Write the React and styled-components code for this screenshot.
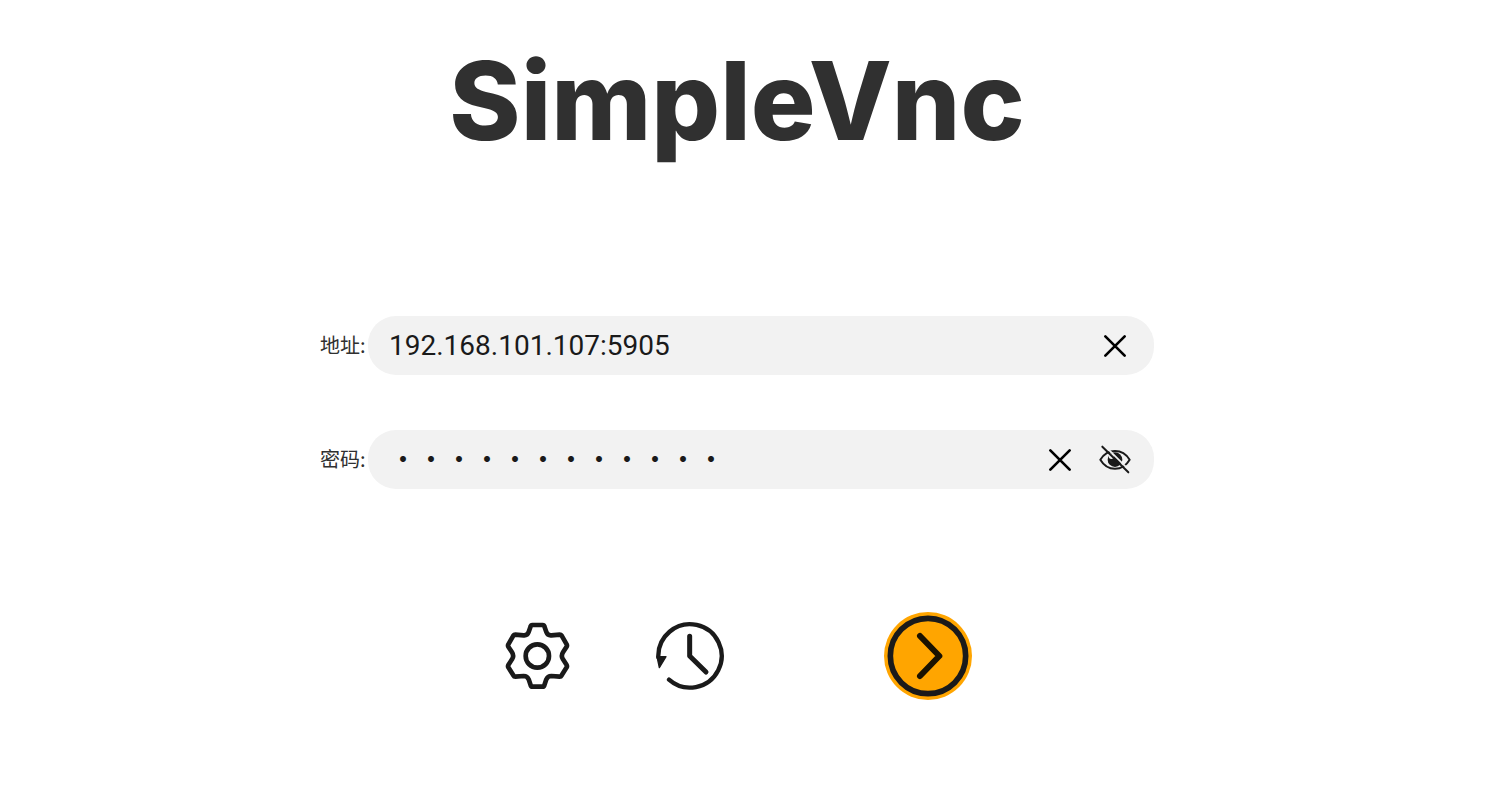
import React, { useState } from "react";
import styled, { createGlobalStyle } from "styled-components";

const GlobalStyle = createGlobalStyle`
  *, *::before, *::after { box-sizing: border-box; }
  body {
    margin: 0;
    background: #fff;
    color: #1a1a1a;
    font-family: "Noto Sans CJK SC", sans-serif;
  }
  button { font: inherit; color: inherit; }
`;

const Page = styled.main`
  display: flex;
  flex-direction: column;
  align-items: center;
  padding: 35px 28px 92px 0;
`;

const Title = styled.h1`
  margin: 0 0 149px;
  font-family: Inter, sans-serif;
  font-size: 108px;
  font-weight: 800;
  line-height: 132px;
  color: #303030;
`;

const Form = styled.form`
  display: flex;
  flex-direction: column;
  align-items: center;
  width: 100%;
`;

const Fields = styled.div`
  display: flex;
  flex-direction: column;
  gap: 55px;
  width: 100%;
  max-width: 834px;
`;

const Row = styled.div`
  display: flex;
  align-items: center;
`;

const Label = styled.label`
  flex: 0 0 48px;
  padding-bottom: 2px;
  font-size: 20px;
  line-height: 28px;
  white-space: nowrap;
  color: #303030;
`;

const Field = styled.div`
  flex: 1;
  min-width: 0;
  display: flex;
  align-items: center;
  gap: 23px;
  height: 59px;
  padding: 0 23px 0 21px;
  border-radius: 28px;
  background: #f2f2f2;
`;

const Input = styled.input`
  flex: 1;
  min-width: 0;
  padding: 0 0 ${(p) => (p.type === "password" ? 4 : 0)}px;
  border: 0;
  outline: 0;
  background: transparent;
  color: #1a1a1a;
  font-family: ${(p) => (p.type === "password" ? "" : "Roboto,")} "Noto Sans CJK SC", sans-serif;
  font-size: 28px;
  line-height: 40px;
`;

const PlainButton = styled.button`
  display: block;
  flex: none;
  width: ${(p) => p.$size}px;
  height: ${(p) => p.$size}px;
  padding: 0;
  border: 0;
  border-radius: 50%;
  background: ${(p) => p.$fill || "transparent"};
  cursor: pointer;

  svg {
    display: block;
    width: 100%;
    height: 100%;
    fill: none;
    stroke: currentColor;
    stroke-linecap: round;
    stroke-linejoin: round;
  }
`;

const Actions = styled.div`
  display: flex;
  align-items: center;
  gap: 158px;
  margin-top: 123px;
`;

const Tools = styled.div`
  display: flex;
  gap: 80px;
`;

const ClearIcon = () => (
  <svg viewBox="0 0 96 96">
    <path d="M19 19 77 77M77 19 19 77" stroke="#000" strokeWidth="8" />
  </svg>
);

const EyeOffIcon = () => (
  <svg viewBox="0 0 96 96" strokeWidth="6">
    <path d="M4 47C14 31 30 21 48 21s34 10 44 26C82 64 66 74 48 74S14 64 4 47Z" />
    <circle cx="48" cy="47" r="22" fill="currentColor" stroke="none" />
    <circle cx="37" cy="37" r="8" fill="#f2f2f2" stroke="none" />
    <path d="M16 4 92 80" stroke="#f2f2f2" strokeWidth="5" />
    <path d="M10 8 88 85" strokeWidth="6" />
  </svg>
);

const GearIcon = () => (
  <svg viewBox="36 30 216 216" strokeWidth="14">
    <path d="M127 45H158Q162 45 163 49L169 66Q173 77 184 76L209 74Q213 74 215 77L230 103Q232 107 230 110L219 127Q212 138 219 148L230 165Q232 169 230 172L215 196Q213 200 209 200L184 198Q173 198 169 208L163 226Q162 230 158 230H127Q123 230 122 226L116 208Q112 198 101 198L76 200Q72 200 70 196L55 172Q53 169 55 165L66 148Q73 138 66 127L55 110Q53 107 55 103L70 77Q72 74 76 74L101 76Q112 77 116 66L122 49Q123 45 127 45Z" />
    <circle cx="142" cy="138" r="35" />
  </svg>
);

const HistoryIcon = () => (
  <svg viewBox="42 30 216 216" strokeWidth="13">
    <path d="M55 142A95 95 0 1 1 87 209" />
    <path d="M149 79V138L198 186" strokeWidth="15" />
    <path d="M51 140H78L58 173Z" fill="currentColor" strokeWidth="4" />
  </svg>
);

const ConnectIcon = () => (
  <svg viewBox="18 17 264 264">
    <circle cx="150" cy="149" r="113" strokeWidth="17" />
    <path d="M126 89 184 149 126 209" stroke="#1a1200" strokeWidth="18" />
  </svg>
);

export default function App() {
  const [address, setAddress] = useState("192.168.101.107:5905");
  const [password, setPassword] = useState("abcdefghijkl");
  const [visible, setVisible] = useState(false);

  return (
    <>
      <GlobalStyle />
      <Page>
        <Title>SimpleVnc</Title>
        <Form onSubmit={(e) => e.preventDefault()}>
          <Fields>
            <Row>
              <Label htmlFor="address">地址:</Label>
              <Field>
                <Input
                  id="address"
                  type="text"
                  value={address}
                  onChange={(e) => setAddress(e.target.value)}
                />
                <PlainButton type="button" $size={32} aria-label="清除地址" onClick={() => setAddress("")}>
                  <ClearIcon />
                </PlainButton>
              </Field>
            </Row>
            <Row>
              <Label htmlFor="password">密码:</Label>
              <Field>
                <Input
                  id="password"
                  type={visible ? "text" : "password"}
                  autoComplete="off"
                  value={password}
                  onChange={(e) => setPassword(e.target.value)}
                />
                <PlainButton type="button" $size={32} aria-label="清除密码" onClick={() => setPassword("")}>
                  <ClearIcon />
                </PlainButton>
                <PlainButton type="button" $size={32} aria-label="显示密码" onClick={() => setVisible(!visible)}>
                  <EyeOffIcon />
                </PlainButton>
              </Field>
            </Row>
          </Fields>
          <Actions>
            <Tools>
              <PlainButton type="button" $size={72} aria-label="设置">
                <GearIcon />
              </PlainButton>
              <PlainButton type="button" $size={72} aria-label="历史记录">
                <HistoryIcon />
              </PlainButton>
            </Tools>
            <PlainButton type="submit" $size={88} $fill="#ffa500" aria-label="连接">
              <ConnectIcon />
            </PlainButton>
          </Actions>
        </Form>
      </Page>
    </>
  );
}
